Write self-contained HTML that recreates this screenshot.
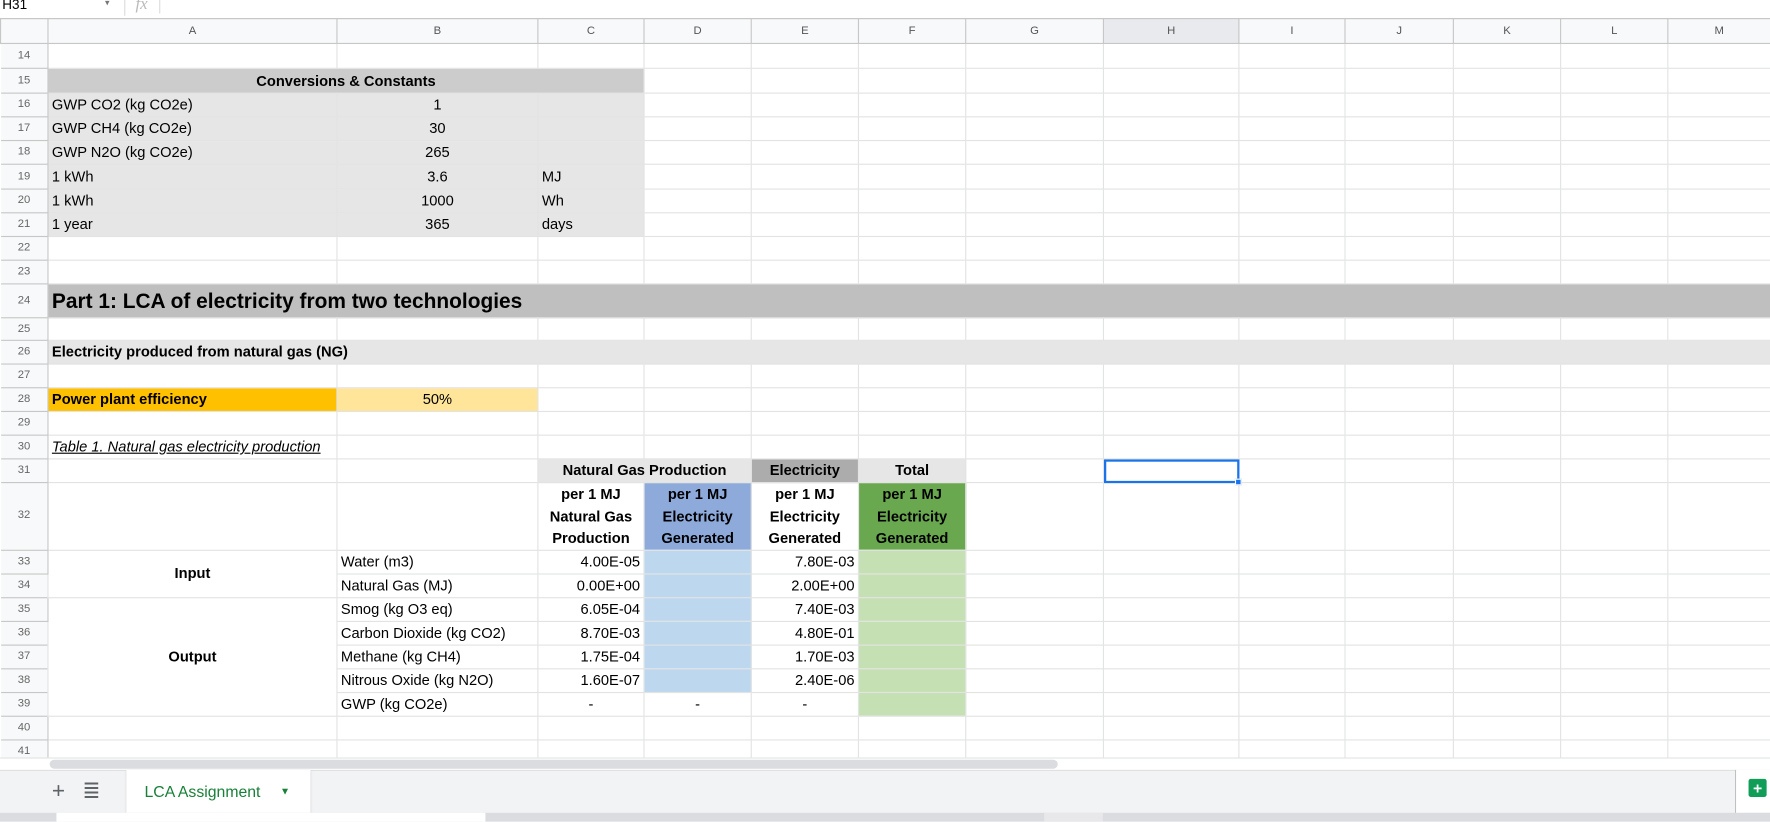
<!DOCTYPE html>
<html><head><meta charset="utf-8">
<style>
html,body{margin:0;padding:0;width:1770px;height:822px;overflow:hidden;background:#fff}
#w{position:absolute;left:0;top:0;width:1568px;height:728px;transform:scale(1.12883);transform-origin:0 0;font-family:"Liberation Sans",sans-serif;overflow:hidden}
#top{position:absolute;left:0;top:0;width:1568px;height:16px;border-bottom:1px solid #c7c7c7;background:#fff;font-size:12px}
table{position:absolute;left:0;top:16px;border-collapse:collapse;table-layout:fixed;width:1568px}
td{border:1px solid #e2e3e3;padding:0 3px;font-size:13px;white-space:nowrap;overflow:visible;color:#000;line-height:14px;height:20px;box-sizing:border-box}
td.rh{background:#f8f9fa;color:#666;font-size:10px;text-align:center;border-color:#c7c7c7;border-left:none;padding:0}
tr.ch td{background:#f8f9fa;color:#555;font-size:10px;text-align:center;height:22px;border-color:#c7c7c7}
.c{text-align:center}.r{text-align:right}.b{font-weight:bold}
.g1{background:#cccccc}.g2{background:#e6e6e6}.g3{background:#bfbfbf}
</style></head><body><div id="w">
<div id="top"><span style="position:absolute;left:2px;top:-3px;font-size:12px">H31</span><span style="position:absolute;left:93px;top:-2px;color:#777;font-size:8px">▾</span><span style="position:absolute;left:110px;top:0;width:1px;height:14px;background:#ddd"></span><span style="position:absolute;left:120px;top:-4px;color:#bbb;font-style:italic;font-family:'Liberation Serif',serif;font-size:15px">fx</span><span style="position:absolute;left:141px;top:0;width:1px;height:12px;background:#ddd"></span></div>
<table>
<colgroup><col style="width:42px"><col style="width:256px"><col style="width:178px"><col style="width:94px"><col style="width:95px"><col style="width:95px"><col style="width:95px"><col style="width:122px"><col style="width:120px"><col style="width:94px"><col style="width:96px"><col style="width:95px"><col style="width:95px"><col style="width:91px"></colgroup>
<tr class="ch"><td></td><td>A</td><td>B</td><td>C</td><td>D</td><td>E</td><td>F</td><td>G</td><td style="background:#e8eaed">H</td><td>I</td><td>J</td><td>K</td><td>L</td><td>M</td></tr>
<tr style="height:22px"><td class="rh">14</td><td></td><td></td><td></td><td></td><td></td><td></td><td></td><td></td><td></td><td></td><td></td><td></td><td></td></tr>
<tr style="height:22px"><td class="rh">15</td><td colspan="3" class="g1 c b">Conversions &amp; Constants</td><td></td><td></td><td></td><td></td><td></td><td></td><td></td><td></td><td></td><td></td></tr>
<tr style="height:21px"><td class="rh">16</td><td class="g2">GWP CO2 (kg CO2e)</td><td class="g2 c">1</td><td class="g2"></td><td></td><td></td><td></td><td></td><td></td><td></td><td></td><td></td><td></td><td></td></tr>
<tr style="height:21px"><td class="rh">17</td><td class="g2">GWP CH4 (kg CO2e)</td><td class="g2 c">30</td><td class="g2"></td><td></td><td></td><td></td><td></td><td></td><td></td><td></td><td></td><td></td><td></td></tr>
<tr style="height:21px"><td class="rh">18</td><td class="g2">GWP N2O (kg CO2e)</td><td class="g2 c">265</td><td class="g2"></td><td></td><td></td><td></td><td></td><td></td><td></td><td></td><td></td><td></td><td></td></tr>
<tr style="height:22px"><td class="rh">19</td><td class="g2">1 kWh</td><td class="g2 c">3.6</td><td class="g2">MJ</td><td></td><td></td><td></td><td></td><td></td><td></td><td></td><td></td><td></td><td></td></tr>
<tr style="height:21px"><td class="rh">20</td><td class="g2">1 kWh</td><td class="g2 c">1000</td><td class="g2">Wh</td><td></td><td></td><td></td><td></td><td></td><td></td><td></td><td></td><td></td><td></td></tr>
<tr style="height:21px"><td class="rh">21</td><td class="g2">1 year</td><td class="g2 c">365</td><td class="g2">days</td><td></td><td></td><td></td><td></td><td></td><td></td><td></td><td></td><td></td><td></td></tr>
<tr style="height:21px"><td class="rh">22</td><td></td><td></td><td></td><td></td><td></td><td></td><td></td><td></td><td></td><td></td><td></td><td></td><td></td></tr>
<tr style="height:21px"><td class="rh">23</td><td></td><td></td><td></td><td></td><td></td><td></td><td></td><td></td><td></td><td></td><td></td><td></td><td></td></tr>
<tr style="height:30px"><td class="rh">24</td><td colspan="13" class="g3 b" style="font-size:18.5px">Part 1: LCA of electricity from two technologies</td></tr>
<tr style="height:20px"><td class="rh">25</td><td></td><td></td><td></td><td></td><td></td><td></td><td></td><td></td><td></td><td></td><td></td><td></td><td></td></tr>
<tr style="height:21px"><td class="rh">26</td><td colspan="13" class="g2 b">Electricity produced from natural gas (NG)</td></tr>
<tr style="height:21px"><td class="rh">27</td><td></td><td></td><td></td><td></td><td></td><td></td><td></td><td></td><td></td><td></td><td></td><td></td><td></td></tr>
<tr style="height:21px"><td class="rh">28</td><td class="b" style="background:#ffc000">Power plant efficiency</td><td class="c" style="background:#ffe599">50%</td><td></td><td></td><td></td><td></td><td></td><td></td><td></td><td></td><td></td><td></td><td></td></tr>
<tr style="height:21px"><td class="rh">29</td><td></td><td></td><td></td><td></td><td></td><td></td><td></td><td></td><td></td><td></td><td></td><td></td><td></td></tr>
<tr style="height:21px"><td class="rh">30</td><td style="font-style:italic;text-decoration:underline">Table 1. Natural gas electricity production</td><td></td><td></td><td></td><td></td><td></td><td></td><td></td><td></td><td></td><td></td><td></td><td></td></tr>
<tr style="height:21px"><td class="rh">31</td><td></td><td></td><td colspan="2" class="g2 c b">Natural Gas Production</td><td class="c b" style="background:#acacac">Electricity</td><td class="g2 c b">Total</td><td></td><td style="outline:2px solid #1a73e8;outline-offset:-2px;position:relative"><span style="position:absolute;right:-3px;bottom:-3px;width:6px;height:6px;background:#1a73e8;border:1px solid #fff;box-sizing:border-box"></span></td><td></td><td></td><td></td><td></td><td></td></tr>
<tr style="height:59px"><td class="rh">32</td><td></td><td></td><td class="c b" style="line-height:19.5px">per 1 MJ<br>Natural Gas<br>Production</td><td class="c b" style="background:#8eaadb;line-height:19.5px">per 1 MJ<br>Electricity<br>Generated</td><td class="c b" style="line-height:19.5px">per 1 MJ<br>Electricity<br>Generated</td><td class="c b" style="background:#6aa84f;line-height:19.5px">per 1 MJ<br>Electricity<br>Generated</td><td></td><td></td><td></td><td></td><td></td><td></td><td></td></tr>
<tr style="height:21px"><td class="rh">33</td><td rowspan="2" class="c b">Input</td><td>Water (m3)</td><td class="r">4.00E-05</td><td style="background:#bdd7ee"></td><td class="r">7.80E-03</td><td style="background:#c5e0b3"></td><td></td><td></td><td></td><td></td><td></td><td></td><td></td></tr>
<tr style="height:21px"><td class="rh">34</td><td>Natural Gas (MJ)</td><td class="r">0.00E+00</td><td style="background:#bdd7ee"></td><td class="r">2.00E+00</td><td style="background:#c5e0b3"></td><td></td><td></td><td></td><td></td><td></td><td></td><td></td></tr>
<tr style="height:21px"><td class="rh">35</td><td rowspan="5" class="c b">Output</td><td>Smog (kg O3 eq)</td><td class="r">6.05E-04</td><td style="background:#bdd7ee"></td><td class="r">7.40E-03</td><td style="background:#c5e0b3"></td><td></td><td></td><td></td><td></td><td></td><td></td><td></td></tr>
<tr style="height:21px"><td class="rh">36</td><td>Carbon Dioxide (kg CO2)</td><td class="r">8.70E-03</td><td style="background:#bdd7ee"></td><td class="r">4.80E-01</td><td style="background:#c5e0b3"></td><td></td><td></td><td></td><td></td><td></td><td></td><td></td></tr>
<tr style="height:21px"><td class="rh">37</td><td>Methane (kg CH4)</td><td class="r">1.75E-04</td><td style="background:#bdd7ee"></td><td class="r">1.70E-03</td><td style="background:#c5e0b3"></td><td></td><td></td><td></td><td></td><td></td><td></td><td></td></tr>
<tr style="height:21px"><td class="rh">38</td><td>Nitrous Oxide (kg N2O)</td><td class="r">1.60E-07</td><td style="background:#bdd7ee"></td><td class="r">2.40E-06</td><td style="background:#c5e0b3"></td><td></td><td></td><td></td><td></td><td></td><td></td><td></td></tr>
<tr style="height:21px"><td class="rh">39</td><td>GWP (kg CO2e)</td><td class="c">-</td><td class="c">-</td><td class="c">-</td><td style="background:#c5e0b3"></td><td></td><td></td><td></td><td></td><td></td><td></td><td></td></tr>
<tr style="height:21px"><td class="rh">40</td><td></td><td></td><td></td><td></td><td></td><td></td><td></td><td></td><td></td><td></td><td></td><td></td><td></td></tr>
<tr style="height:21px"><td class="rh">41</td><td></td><td></td><td></td><td></td><td></td><td></td><td></td><td></td><td></td><td></td><td></td><td></td><td></td></tr>
</table>
<div style="position:absolute;left:0;top:671px;width:1568px;height:11px;background:#fff;border-top:1px solid #e2e3e3"></div>
<div style="position:absolute;left:44px;top:673px;width:893px;height:8px;border-radius:4px;background:#dadce0"></div>
<div style="position:absolute;left:0;top:682px;width:1568px;height:39px;background:#f1f3f4;border-top:1px solid #e0e0e0"></div>
<div style="position:absolute;left:46px;top:690px;font-size:20px;color:#5f6368">+</div>
<div style="position:absolute;left:75px;top:693px;width:12px;height:14px;background:repeating-linear-gradient(#5f6368 0 2px,transparent 2px 4px)"></div>
<div style="position:absolute;left:112px;top:682px;width:163px;height:39px;background:#fff;box-shadow:0 1px 2px #ccc"><span style="position:absolute;left:16px;top:11px;font-size:14px;color:#188038">LCA Assignment</span><span style="position:absolute;left:136px;top:14px;font-size:9px;color:#188038">▼</span></div>
<div style="position:absolute;left:1537px;top:682px;width:1px;height:39px;background:#c0c0c0"></div>
<div style="position:absolute;left:1538px;top:682px;width:30px;height:39px;background:#fff"></div>
<div style="position:absolute;left:1549px;top:690px;width:16px;height:16px;background:#0f9d58;border-radius:2px;color:#fff;font-size:14px;line-height:16px;text-align:center;font-weight:bold">+</div>
<div style="position:absolute;left:0;top:720px;width:1568px;height:8px;background:#dadce0"></div>
<div style="position:absolute;left:50px;top:720px;width:380px;height:8px;background:#fff"></div>
<div style="position:absolute;left:925px;top:720px;width:52px;height:8px;background:#e8e8ea"></div>
</div></body></html>
